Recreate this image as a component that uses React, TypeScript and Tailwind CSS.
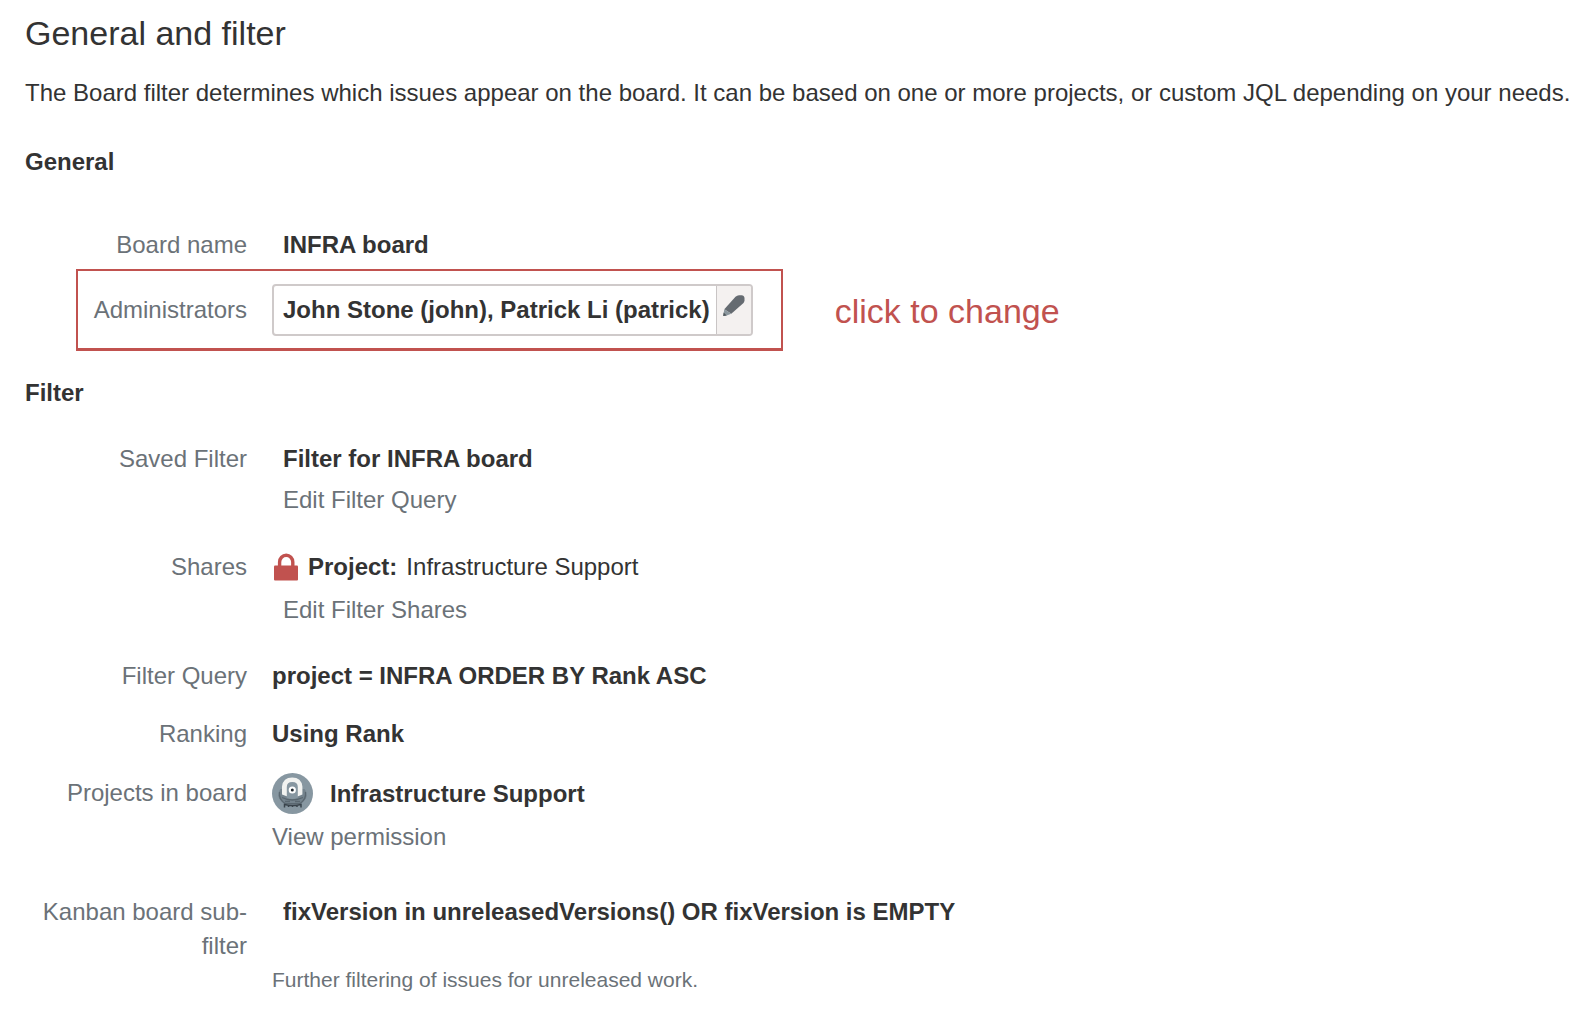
import type { ReactNode } from "react";

function Row({ label, className = "", children }: { label: string; className?: string; children: ReactNode }) {
  return (
    <div className={`flex gap-[25px] ${className}`}>
      <dt className="w-[222px] shrink-0 text-right text-[#6b7278]">{label}</dt>
      <dd className="min-w-0 flex-1">{children}</dd>
    </div>
  );
}

function PencilIcon() {
  return (
    <svg className="h-[22px] w-[22px]" viewBox="0 0 22 22" aria-hidden="true">
      <path d="M1.300 14.300 12.500 1.800Q14 .3 16 .2h2.500Q21.300.4 21.500 3v2.500q-.1 1.400-1 2.400L8.300 18.800z" fill="#656b71" />
      <path d="M1.300 14.300 8.300 18.800 3 20.800.2 21z" fill="#8b979e" />
      <path d="M.6 17.500 3.600 20.600.2 21z" fill="#4f565b" />
    </svg>
  );
}

function LockIcon() {
  return (
    <svg className="ml-0.5 h-7 w-6 shrink-0" viewBox="0 0 24 28" aria-hidden="true">
      <path d="M5.600 13V9a6.600 6.800 0 0 1 13.200 0V13" fill="none" stroke="#c1524f" strokeWidth="3.400" />
      <rect x="0" y="12.500" width="24" height="15" rx="1" fill="#c1524f" />
    </svg>
  );
}

function ProjectAvatar() {
  return (
    <svg className="h-[41px] w-[41px] shrink-0" viewBox="0 0 41 41" aria-hidden="true">
      <circle cx="20.500" cy="20.500" r="20.500" fill="#8797a1" />
      <path d="M8.500 16q-3.500 4-1.500 9.500Q11 32 20.500 32T34 25.500Q36 20 32.500 16z" fill="#74838d" />
      <path d="M7.500 19q-1 7 5.500 11.500h15Q34.500 26 33.500 19" fill="none" stroke="#5a6770" strokeWidth="1.200" />
      <path d="M12.500 34.500v-3q8 2 16.500 0v3M16.500 32v2M20.500 32v2M25 32v2" fill="none" stroke="#39434b" strokeWidth="1.500" />
      <path d="M10 21.500V13.500Q11 4.500 20.200 4.500t10.200 9v8q-9.500 5-20.400 0z" fill="#f1f2f0" />
      <path d="M14.800 25V14q0-5 5.500-5t5.500 5v11q-5.500 2-11 0z" fill="#8797a1" />
      <path d="M10 24.500q10 5 21 0M13 28.500h5M23 28.500h5" fill="none" stroke="#5a6770" strokeWidth="1.300" />
      <circle cx="20.300" cy="17" r="3.600" fill="#fff" />
      <circle cx="20.300" cy="17" r="1.500" fill="#1f272d" />
    </svg>
  );
}

export default function App() {
  return (
    <main className="min-h-screen bg-white px-[25px] pt-[13px] pb-4 font-['Liberation_Sans',Arial,sans-serif] text-[24px] leading-[34px] text-[#333]">
      <h1 className="text-[34px] leading-[40px]">General and filter</h1>
      <p className="mt-[23px] -mr-5">
        The Board filter determines which issues appear on the board. It can be based on one or more projects, or custom
        JQL depending on your needs.
      </p>

      <section>
        <h2 className="mt-[35px] font-bold">General</h2>
        <dl className="mt-[49px]">
          <Row label="Board name">
            <b className="pl-[11px]">INFRA board</b>
          </Row>
          <div className="mt-[7px] ml-[51px] flex items-center gap-[52px]">
            <div className="flex items-center gap-[25px] border-2 border-b-3 border-[#c1524f] pt-[13px] pr-7 pb-3">
              <dt className="w-[169px] text-right text-[#6b7278]">Administrators</dt>
              <dd className="flex h-[52px] items-stretch rounded-[4px] border-2 border-[#cfcaca]">
                <b className="py-[7px] pr-1.5 pl-[9px]">John Stone (john), Patrick Li (patrick)</b>
                <button
                  type="button"
                  aria-label="Edit administrators"
                  className="flex w-[35px] cursor-pointer justify-center rounded-r-[2px] border-l border-[#c9c5c5] bg-[#f4f1f0] pt-[9px]"
                >
                  <PencilIcon />
                </button>
              </dd>
            </div>
            <span className="pt-0.5 text-[34px] leading-[38px] text-[#c1524f]">click to change</span>
          </div>
        </dl>
      </section>

      <section>
        <h2 className="mt-[25px] font-bold">Filter</h2>
        <dl className="mt-8">
          <Row label="Saved Filter">
            <div className="flex flex-col items-start gap-[7px] pl-[11px]">
              <b>Filter for INFRA board</b>
              <a href="#edit-query" className="text-[#6b7278]">Edit Filter Query</a>
            </div>
          </Row>
          <Row label="Shares" className="mt-[33px]">
            <div className="flex items-center">
              <LockIcon />
              <b className="ml-2.5">Project:</b>
              <span className="ml-[9px]">Infrastructure Support</span>
            </div>
            <a href="#edit-shares" className="mt-[9px] ml-[11px] inline-block text-[#6b7278]">Edit Filter Shares</a>
          </Row>
          <Row label="Filter Query" className="mt-8">
            <b>project = INFRA ORDER BY Rank ASC</b>
          </Row>
          <Row label="Ranking" className="mt-6">
            <b>Using Rank</b>
          </Row>
          <Row label="Projects in board" className="mt-[25px]">
            <div className="flex h-[35px] items-center gap-[17px]">
              <ProjectAvatar />
              <b>Infrastructure Support</b>
            </div>
            <a href="#permission" className="mt-[9px] inline-block text-[#6b7278]">View permission</a>
          </Row>
          <Row label="Kanban board sub-filter" className="mt-[41px]">
            <b className="pl-[11px]">fixVersion in unreleasedVersions() OR fixVersion is EMPTY</b>
            <p className="mt-[34px] text-[21px] text-[#6b7278]">Further filtering of issues for unreleased work.</p>
          </Row>
        </dl>
      </section>
    </main>
  );
}
